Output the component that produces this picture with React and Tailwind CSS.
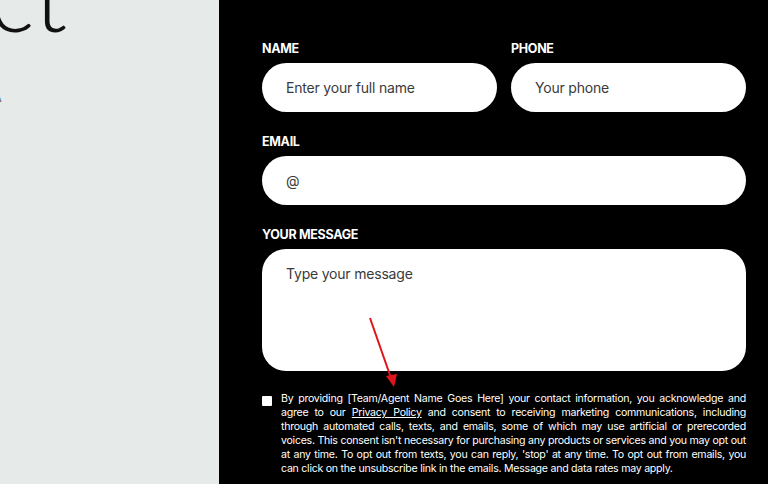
import React from 'react';

const Label = ({ children }) => (
  <label className="block text-[12.5px] font-bold leading-4 tracking-tight text-white uppercase mb-[6px]">
    {children}
  </label>
);

const inputClass =
  'block w-full h-[49px] rounded-full bg-white px-6 text-[14px] tracking-[-0.2px] text-[#333] placeholder:text-[#3a3a3a] outline-none';

const App = () => {
  return (
    <div className="relative flex h-[484px] w-[768px] overflow-hidden font-['Inter',sans-serif]">
      <div className="w-[219px] shrink-0 bg-[#e6ebea] overflow-hidden">
        <div className="-mt-[53px] -ml-[260px] whitespace-nowrap text-[96px] font-light leading-none text-[#111] font-['Lato',sans-serif]">
          Contact
        </div>
        <div className="mt-[49px] -ml-[22px] whitespace-nowrap text-[10px] leading-[12px] tracking-[0.15em] text-[#555]">
          USA
        </div>
      </div>

      <div className="flex-1 bg-black pl-[43px] pr-[22px] pt-[41px]">
        <div className="flex gap-[14px]">
          <div className="flex-1">
            <Label>Name</Label>
            <input className={inputClass} placeholder="Enter your full name" />
          </div>
          <div className="flex-1">
            <Label>Phone</Label>
            <input className={inputClass} placeholder="Your phone" />
          </div>
        </div>

        <div className="mt-[22px]">
          <Label>Email</Label>
          <input className={inputClass} placeholder="@" />
        </div>

        <div className="mt-[22px]">
          <Label>Your message</Label>
          <textarea
            className="block w-full h-[122px] resize-none rounded-[24px] bg-white px-6 pt-[14px] text-[14px] tracking-[-0.2px] text-[#333] placeholder:text-[#3a3a3a] outline-none"
            placeholder="Type your message"
          />
        </div>

        <div className="mt-[21px] flex items-start gap-[9px]">
          <input type="checkbox" className="mt-[4px] h-[10px] w-[10px] shrink-0 appearance-none rounded-[1px] bg-white" />
          <p className="text-[10.6px] leading-[14px] tracking-[-0.26px] text-white text-justify">
            By providing [Team/Agent Name Goes Here] your contact information, you acknowledge and agree to our{' '}
            <a href="#" className="underline">Privacy Policy</a> and consent to receiving marketing communications, including
            through automated calls, texts, and emails, some of which may use artificial or prerecorded voices. This consent
            isn't necessary for purchasing any products or services and you may opt out at any time. To opt out from texts,
            you can reply, 'stop' at any time. To opt out from emails, you can click on the unsubscribe link in the emails.
            Message and data rates may apply.
          </p>
        </div>
      </div>

      <svg className="absolute left-[360px] top-[314px]" width="44" height="76" viewBox="0 0 44 76">
        <line x1="10" y1="4" x2="31" y2="64" stroke="#e0141b" strokeWidth="2" />
        <polygon points="26,62 37,60 34,73" fill="#e0141b" />
      </svg>
    </div>
  );
};

export default App;
